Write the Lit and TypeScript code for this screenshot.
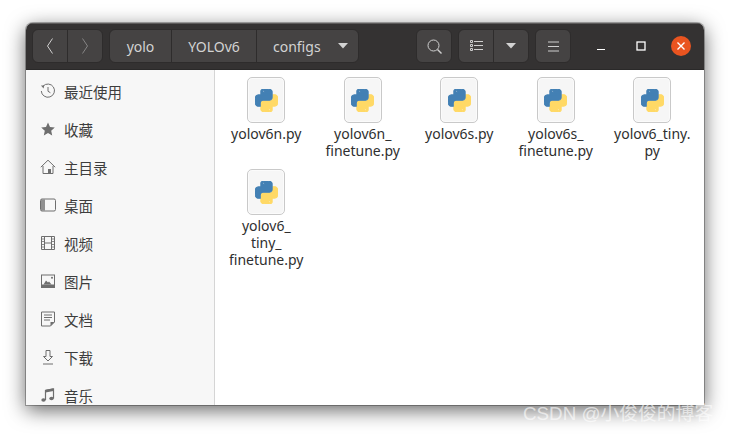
import { LitElement, css, html, svg } from 'lit';
import { customElement } from 'lit/decorators.js';

const BLUE_PATH =
  'M14.25.18l.9.2.73.26.59.3.45.32.34.34.25.34.16.33.1.3.04.26.02.2-.01.13V8.5l-.05.63-.13.55-.21.46-.26.38-.3.31-.33.25-.35.19-.35.14-.33.1-.3.07-.26.04-.21.02H8.77l-.69.05-.59.14-.5.22-.41.27-.33.32-.27.35-.2.36-.15.37-.1.35-.07.32-.04.27-.02.21v3.06H3.17l-.21-.03-.28-.07-.32-.12-.35-.18-.36-.26-.36-.36-.35-.46-.32-.59-.28-.73-.21-.88-.14-1.05-.05-1.23.06-1.22.16-1.04.24-.87.32-.71.36-.57.4-.44.42-.33.42-.24.4-.16.36-.1.32-.05.24-.01h.16l.06.01h8.16v-.83H6.18l-.01-2.75-.02-.37.05-.34.11-.31.17-.28.25-.26.31-.23.38-.2.44-.18.51-.15.58-.12.64-.1.71-.06.77-.04.84-.02 1.27.05zm-6.3 1.98l-.23.33-.08.41.08.41.23.34.33.22.41.09.41-.09.33-.22.23-.34.08-.41-.08-.41-.23-.33-.33-.22-.41-.09-.41.09z';
const YELLOW_PATH =
  'M21.04 6.11l.28.06.32.12.35.18.36.27.36.35.35.47.32.59.28.73.21.88.14 1.04.05 1.23-.06 1.23-.16 1.04-.24.86-.32.71-.36.57-.4.45-.42.33-.42.24-.4.16-.36.09-.32.05-.24.02-.16-.01h-8.22v.82h5.84l.01 2.76.02.36-.05.34-.11.31-.17.29-.25.25-.31.24-.38.2-.44.17-.51.15-.58.13-.64.09-.71.07-.77.04-.84.01-1.27-.04-1.07-.14-.9-.2-.73-.25-.59-.3-.45-.33-.34-.34-.25-.34-.16-.33-.1-.3-.04-.25-.02-.2.01-.13v-5.34l.05-.64.13-.54.21-.46.26-.38.3-.32.33-.24.35-.2.35-.14.33-.1.3-.06.26-.04.21-.02.13-.01h5.84l.69-.05.59-.14.5-.21.41-.28.33-.32.27-.35.2-.36.15-.36.1-.35.07-.32.04-.28.02-.21V6.07h2.09l.14.01zm-6.47 14.25l-.23.33-.08.41.08.41.23.33.33.23.41.08.41-.08.33-.23.23-.33.08-.41-.08-.41-.23-.33-.33-.23-.41-.08-.41.08z';

const placeIcons = {
  recent: svg`<path d="M3 3.200A6.600 6.600 0 1 1 1.300 8" fill="none" stroke="currentColor"/><path d="M.9 2.400l3.300.2-.6 3z" fill="currentColor"/><path d="M8 4v4.300l2.400 1.400" fill="none" stroke="currentColor"/>`,
  star: svg`<path d="M8 1.600l2 4.400 4.800.5-3.600 3.200 1 4.700L8 12l-4.200 2.400 1-4.700L1.200 6.500 6 6z" fill="currentColor"/>`,
  home: svg`<path d="M.8 8.200L8 1.200l7.200 7M3 7v7.500h10V7" fill="none" stroke="currentColor"/><path d="M8 10h3v4.500H8z" fill="currentColor"/>`,
  desktop: svg`<rect x=".5" y="2" width="15" height="12" rx="1.500" fill="none" stroke="currentColor"/><path d="M1 2.500h4v11H1z" fill="currentColor" opacity=".75"/>`,
  video: svg`<path d="M1.500 1.500h13v13h-13zM4.500 1.500v13M11.500 1.500v13M4.500 8h7" fill="none" stroke="currentColor"/><path d="M1.500 4h3M1.500 6.500h3M1.500 9.500h3M1.500 12h3M11.500 4h3M11.500 6.500h3M11.500 9.500h3M11.500 12h3" stroke="currentColor" stroke-width=".8"/>`,
  picture: svg`<rect x="1.500" y="2" width="13" height="12" fill="none" stroke="currentColor"/><path d="M1 11.500h14V15H1z" fill="currentColor"/><path d="M3.500 11.500l2.500-4 2 2 1-1 2.500 3z" fill="currentColor"/><circle cx="12" cy="4.800" r="1" fill="currentColor"/>`,
  document: svg`<path d="M1.500 1h13v10l-4 4h-9z" fill="none" stroke="currentColor"/><path d="M4 4h8M4 6.500h8M4 9h6" stroke="currentColor"/><path d="M10.500 15v-4h4z" fill="currentColor"/>`,
  download: svg`<path d="M6 1.500h4v6h2.500L8 12 3.500 7.500H6z" fill="none" stroke="currentColor"/><path d="M3 15h10" stroke="currentColor"/>`,
  music: svg`<path d="M5.500 13V3.500l8-1.500v9.500" fill="none" stroke="currentColor" stroke-width="1.200"/><path d="M5.500 2.800l8-1.500V4l-8 1.500z" fill="currentColor"/><ellipse cx="3.500" cy="13" rx="2.200" ry="1.800" fill="currentColor"/><ellipse cx="11.500" cy="11.500" rx="2.200" ry="1.800" fill="currentColor"/>`,
};

const PLACES: [string, keyof typeof placeIcons][] = [
  ['最近使用', 'recent'],
  ['收藏', 'star'],
  ['主目录', 'home'],
  ['桌面', 'desktop'],
  ['视频', 'video'],
  ['图片', 'picture'],
  ['文档', 'document'],
  ['下载', 'download'],
  ['音乐', 'music'],
];

const FILES = [
  ['yolov6n.py'],
  ['yolov6n_', 'finetune.py'],
  ['yolov6s.py'],
  ['yolov6s_', 'finetune.py'],
  ['yolov6_tiny.', 'py'],
  ['yolov6_', 'tiny_', 'finetune.py'],
];

@customElement('app-root')
export class AppRoot extends LitElement {
  static override styles = css`
    :host {
      display: block;
      width: 730px;
      height: 434px;
      box-sizing: border-box;
      padding: 23px 26px 29px;
      background: #fff;
      overflow: hidden;
      position: relative;
      font-family: 'Noto Sans', 'Noto Sans CJK SC', sans-serif;
    }

    .window {
      height: 382px;
      display: flex;
      flex-direction: column;
      border-radius: 7px 7px 0 0;
      overflow: hidden;
      background: #fff;
      box-shadow: 0 5px 20px rgba(0, 0, 0, 0.62), 0 0 0 1px rgba(0, 0, 0, 0.28);
    }

    .header {
      flex: none;
      height: 47px;
      box-sizing: border-box;
      padding: 6px 3px 6px 6px;
      display: flex;
      align-items: flex-start;
      gap: 6px;
      background: #343232;
      border-bottom: 1px solid #2a2929;
      box-shadow: inset 0 1px #5c5a5a;
      color: #d3d3d3;
    }

    .group {
      display: flex;
      height: 34px;
      background: #454343;
      border: 1px solid #2e2c2c;
      border-radius: 6px;
      box-sizing: border-box;
    }

    .group > div {
      display: flex;
      align-items: center;
      justify-content: center;
      border-left: 1px solid #2e2c2c;
      font-size: 14px;
    }

    .group > div:first-child {
      border-left: 0;
    }

    .nav {
      width: 34px;
    }

    .crumb-yolo {
      width: 61px;
    }

    .crumb-yolov6 {
      width: 84px;
    }

    .group > .crumb-configs {
      width: 102px;
      gap: 17px;
      padding-left: 16px;
      box-sizing: border-box;
      justify-content: flex-start;
    }

    .spacer {
      flex: 1;
    }

    .icon-btn {
      width: 34px;
    }

    .arrow {
      width: 34px;
    }

    .wm {
      display: flex;
      align-items: center;
      justify-content: center;
      width: 40px;
      height: 34px;
    }

    .wm.first {
      margin-left: 4px;
      margin-right: -6px;
    }

    .wm.mid {
      margin-right: -6px;
    }

    .close {
      width: 20px;
      height: 20px;
      border-radius: 50%;
      background: #e95420;
      display: flex;
      align-items: center;
      justify-content: center;
    }

    .body {
      flex: 1;
      min-height: 0;
      display: flex;
    }

    .sidebar {
      flex: none;
      width: 189px;
      box-sizing: border-box;
      padding-top: 2px;
      background: #f7f7f7;
      border-right: 1px solid #d5d5d5;
      overflow: hidden;
    }

    .place {
      height: 38px;
      display: flex;
      align-items: center;
      gap: 8px;
      padding-left: 14px;
      font-size: 14.5px;
      color: #3d3d3d;
    }

    .place svg {
      flex: none;
      color: #6e6e6e;
    }

    .files {
      flex: 1;
      padding: 7px 3px 0 3px;
      display: grid;
      grid-template-columns: repeat(5, 96.500px);
      grid-auto-rows: min-content;
      row-gap: 10px;
      align-content: start;
    }

    .file {
      display: flex;
      flex-direction: column;
      align-items: center;
      color: #2f2f2f;
      font-size: 14px;
      line-height: 17px;
      text-align: center;
    }

    .tile {
      width: 38px;
      height: 46px;
      box-sizing: border-box;
      margin-bottom: 2px;
      display: flex;
      align-items: center;
      justify-content: center;
      background: #f6f6f6;
      border: 1px solid #c9c9c9;
      border-radius: 5px;
      box-shadow: inset 0 0 0 1px #fbfbfb;
    }

    .watermark {
      position: absolute;
      left: 523px;
      top: 403px;
      font-size: 18.800px;
      line-height: 22px;
      white-space: nowrap;
      color: rgba(255, 255, 255, 0.62);
      font-family: 'Liberation Sans', 'Noto Sans CJK SC', sans-serif;
    }
  `;

  private icon(place: keyof typeof placeIcons) {
    return html`<svg width="16" height="16" viewBox="0 0 16 16">${placeIcons[place]}</svg>`;
  }

  private caret() {
    return html`<svg width="10" height="6" viewBox="0 0 10 6"><path d="M0 0h10L5 5.500z" fill="#d3d3d3" /></svg>`;
  }

  private renderHeader() {
    return html`
      <div class="header">
        <div class="group">
          <div class="nav">
            <svg width="8" height="16" viewBox="0 0 8 16">
              <path d="M6.500 .5L1.500 8l5 7.500" fill="none" stroke="#cfcfcf" />
            </svg>
          </div>
          <div class="nav">
            <svg width="8" height="16" viewBox="0 0 8 16">
              <path d="M1.500 .5l5 7.500-5 7.500" fill="none" stroke="#858484" />
            </svg>
          </div>
        </div>
        <div class="group">
          <div class="crumb-yolo">yolo</div>
          <div class="crumb-yolov6">YOLOv6</div>
          <div class="crumb-configs"><span>configs</span>${this.caret()}</div>
        </div>
        <div class="spacer"></div>
        <div class="group">
          <div class="icon-btn">
            <svg width="15" height="15" viewBox="0 0 15 15">
              <circle cx="6.500" cy="6.500" r="5.500" fill="none" stroke="#cfcfcf" />
              <path d="M10.500 10.500l4 4" stroke="#cfcfcf" stroke-width="1.400" />
            </svg>
          </div>
        </div>
        <div class="group">
          <div class="icon-btn">
            <svg width="13" height="12" viewBox="0 0 13 12">
              <path d="M.5.500h2v2h-2zM.5 4.500h2v2h-2zM.5 8.500h2v2h-2z" fill="none" stroke="#cfcfcf" />
              <path d="M4 1.500h9M4 5.500h9M4 9.500h9" stroke="#cfcfcf" />
            </svg>
          </div>
          <div class="arrow">${this.caret()}</div>
        </div>
        <div class="group">
          <div class="icon-btn">
            <svg width="11" height="11" viewBox="0 0 11 11">
              <path d="M0 1h11M0 5.500h11M0 10h11" stroke="#cfcfcf" />
            </svg>
          </div>
        </div>
        <div class="wm first">
          <svg width="10" height="10" viewBox="0 0 10 10"><path d="M1 8.500h8" stroke="#fff" stroke-width="1.200" /></svg>
        </div>
        <div class="wm mid">
          <svg width="10" height="10" viewBox="0 0 10 10">
            <rect x="1" y="1" width="8" height="8" fill="none" stroke="#fff" stroke-width="1.300" />
          </svg>
        </div>
        <div class="wm">
          <div class="close">
            <svg width="10" height="10" viewBox="0 0 10 10">
              <path d="M1.500 1.500l7 7M8.500 1.500l-7 7" stroke="#fff" stroke-width="1.400" />
            </svg>
          </div>
        </div>
      </div>
    `;
  }

  override render() {
    return html`
      <div class="window">
        ${this.renderHeader()}
        <div class="body">
          <div class="sidebar">
            ${PLACES.map(([label, place]) => html`<div class="place">${this.icon(place)}<span>${label}</span></div>`)}
          </div>
          <div class="files">
            ${FILES.map(
              (lines) => html`
                <div class="file">
                  <div class="tile">
                    <svg width="23" height="23" viewBox="0 0 24 24">
                      <path d=${YELLOW_PATH} fill="#ffd966" stroke="#ffd966" stroke-width="1.300" fill-rule="evenodd" />
                      <path d=${BLUE_PATH} fill="#4380b4" stroke="#4380b4" stroke-width="1.300" fill-rule="evenodd" />
                    </svg>
                  </div>
                  ${lines.map((line) => html`<div>${line}</div>`)}
                </div>
              `,
            )}
          </div>
        </div>
      </div>
      <div class="watermark">CSDN @小俊俊的博客</div>
    `;
  }
}

declare global {
  interface HTMLElementTagNameMap {
    'app-root': AppRoot;
  }
}
